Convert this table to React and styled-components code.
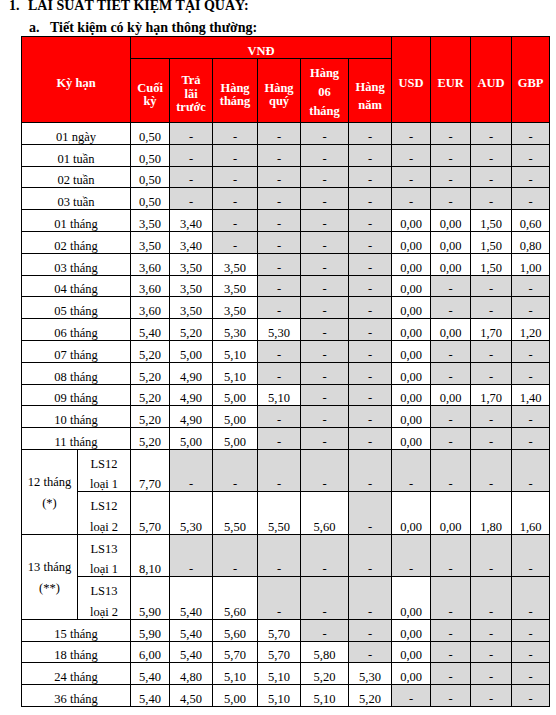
import styled, { createGlobalStyle } from "styled-components";

const GlobalStyle = createGlobalStyle`
  html, body {
    margin: 0;
    background: #fff;
  }
  body {
    font-family: "Liberation Serif", "Times New Roman", serif;
    color: #000;
  }
`;

const G = null;

const plainRows = [
  ["01 ngày", "0,50", G, G, G, G, G, G, G, G, G],
  ["01 tuần", "0,50", G, G, G, G, G, G, G, G, G],
  ["02 tuần", "0,50", G, G, G, G, G, G, G, G, G],
  ["03 tuần", "0,50", G, G, G, G, G, G, G, G, G],
  ["01 tháng", "3,50", "3,40", G, G, G, G, "0,00", "0,00", "1,50", "0,60"],
  ["02 tháng", "3,50", "3,40", G, G, G, G, "0,00", "0,00", "1,50", "0,80"],
  ["03 tháng", "3,60", "3,50", "3,50", G, G, G, "0,00", "0,00", "1,50", "1,00"],
  ["04 tháng", "3,60", "3,50", "3,50", G, G, G, "0,00", G, G, G],
  ["05 tháng", "3,60", "3,50", "3,50", G, G, G, "0,00", G, G, G],
  ["06 tháng", "5,40", "5,20", "5,30", "5,30", G, G, "0,00", "0,00", "1,70", "1,20"],
  ["07 tháng", "5,20", "5,00", "5,10", G, G, G, "0,00", G, G, G],
  ["08 tháng", "5,20", "4,90", "5,10", G, G, G, "0,00", G, G, G],
  ["09 tháng", "5,20", "4,90", "5,00", "5,10", G, G, "0,00", "0,00", "1,70", "1,40"],
  ["10 tháng", "5,20", "4,90", "5,00", G, G, G, "0,00", G, G, G],
  ["11 tháng", "5,20", "5,00", "5,00", G, G, G, "0,00", G, G, G],
];

const groups = [
  {
    label: ["12 tháng", "(*)"],
    subs: [
      { name: ["LS12", "loại 1"], v: ["7,70", G, G, G, G, G, G, G, G, G] },
      { name: ["LS12", "loại 2"], v: ["5,70", "5,30", "5,50", "5,50", "5,60", G, "0,00", "0,00", "1,80", "1,60"] },
    ],
  },
  {
    label: ["13 tháng", "(**)"],
    subs: [
      { name: ["LS13", "loại 1"], v: ["8,10", G, G, G, G, G, G, G, G, G] },
      { name: ["LS13", "loại 2"], v: ["5,90", "5,40", "5,60", G, G, G, "0,00", G, G, G] },
    ],
  },
];

const tailRows = [
  ["15 tháng", "5,90", "5,40", "5,60", "5,70", G, G, "0,00", G, G, G],
  ["18 tháng", "6,00", "5,40", "5,70", "5,70", "5,80", G, "0,00", G, G, G],
  ["24 tháng", "5,40", "4,80", "5,10", "5,10", "5,20", "5,30", "0,00", G, G, G],
  ["36 tháng", "5,40", "4,50", "5,00", "5,10", "5,10", "5,20", G, G, G, G],
];

const colWidths = [56, 53, 39, 43, 45, 43, 48, 43, 39, 40, 41, 38];

const vndCols = [
  { lines: ["Cuối", "kỳ"], lh: 13, pt: 8 },
  { lines: ["Trả", "lãi", "trước"], lh: 13.5, pt: 8 },
  { lines: ["Hàng", "tháng"], lh: 13, pt: 8 },
  { lines: ["Hàng", "quý"], lh: 13, pt: 8 },
  { lines: ["Hàng", "06", "tháng"], lh: 19, pt: 3 },
  { lines: ["Hàng", "năm"], lh: 18, pt: 10 },
];

const currencies = ["USD", "EUR", "AUD", "GBP"];

const Page = styled.div`
  width: 556px;
  height: 715px;
  overflow: hidden;
`;

const Heading = styled.div`
  display: flex;
  font-size: 14px;
  font-weight: bold;
  line-height: 16px;
  margin-top: ${(p) => p.$top}px;
  padding-left: ${(p) => p.$indent}px;
  white-space: nowrap;
`;

const Marker = styled.span`
  width: ${(p) => p.$w}px;
  flex: none;
`;

const Table = styled.table`
  margin-left: 21px;
  width: 528px;
  table-layout: fixed;
  border-collapse: collapse;
  font-family: "Liberation Serif", "Times New Roman", serif;
  font-size: 12.5px;
  color: #000;
`;

const HeadRow = styled.tr`
  height: ${(p) => p.$h}px;
`;

const HeadCell = styled.th`
  background: #ff0000;
  color: #fff;
  font-weight: bold;
  border: 1px solid #000;
  padding: ${(p) => (p.$pt === undefined ? 8 : p.$pt)}px 0 0;
  text-align: center;
  vertical-align: middle;
  line-height: ${(p) => p.$lh || 15}px;
`;

const Row = styled.tr`
  height: ${(p) => p.$h}px;
`;

const Cell = styled.td`
  border: 1px solid #000;
  background: ${(p) => (p.$gray ? "#d9d9d9" : "#fff")};
  padding: 0;
  text-align: center;
  vertical-align: bottom;
  line-height: 13px;
  white-space: nowrap;
`;

const GroupCell = styled(Cell)`
  vertical-align: middle;
  line-height: 21px;
  padding-top: 2px;
`;

const Line = styled.span`
  display: block;
  padding-bottom: ${(p) => p.$gap || 0}px;
`;

const Values = ({ values }) =>
  values.map((v, i) => (
    <Cell key={i} $gray={v === null}>
      {v === null ? "-" : v}
    </Cell>
  ));

export default function App() {
  return (
    <Page>
      <GlobalStyle />
      <Heading $top={-2} $indent={9}>
        <Marker $w={19}>1.</Marker>
        LAI SUẤT TIẾT KIỆM TẠI QUẦY:
      </Heading>
      <Heading $top={6} $indent={29}>
        <Marker $w={21}>a.</Marker>
        Tiết kiệm có kỳ hạn thông thường:
      </Heading>
      <Table>
        <colgroup>
          {colWidths.map((w, i) => (
            <col key={i} style={{ width: w }} />
          ))}
        </colgroup>
        <thead>
          <HeadRow $h={22}>
            <HeadCell rowSpan={2} colSpan={2}>Kỳ hạn</HeadCell>
            <HeadCell colSpan={6} $lh={13}>VNĐ</HeadCell>
            {currencies.map((c) => (
              <HeadCell key={c} rowSpan={2}>{c}</HeadCell>
            ))}
          </HeadRow>
          <HeadRow $h={64}>
            {vndCols.map((c, i) => (
              <HeadCell key={i} $lh={c.lh} $pt={c.pt}>
                {c.lines.map((l) => (
                  <Line key={l}>{l}</Line>
                ))}
              </HeadCell>
            ))}
          </HeadRow>
        </thead>
        <tbody>
          {plainRows.map(([label, ...v]) => (
            <Row key={label} $h={21.8}>
              <Cell colSpan={2}>{label}</Cell>
              <Values values={v} />
            </Row>
          ))}
          {groups.map((g) =>
            g.subs.map((s, si) => (
              <Row key={g.label[0] + si} $h={42.5}>
                {si === 0 && (
                  <GroupCell rowSpan={2}>
                    {g.label.map((l) => (
                      <Line key={l}>{l}</Line>
                    ))}
                  </GroupCell>
                )}
                <Cell>
                  <Line $gap={7.5}>{s.name[0]}</Line>
                  <Line>{s.name[1]}</Line>
                </Cell>
                <Values values={s.v} />
              </Row>
            ))
          )}
          {tailRows.map(([label, ...v]) => (
            <Row key={label} $h={21.75}>
              <Cell colSpan={2}>{label}</Cell>
              <Values values={v} />
            </Row>
          ))}
        </tbody>
      </Table>
    </Page>
  );
}
